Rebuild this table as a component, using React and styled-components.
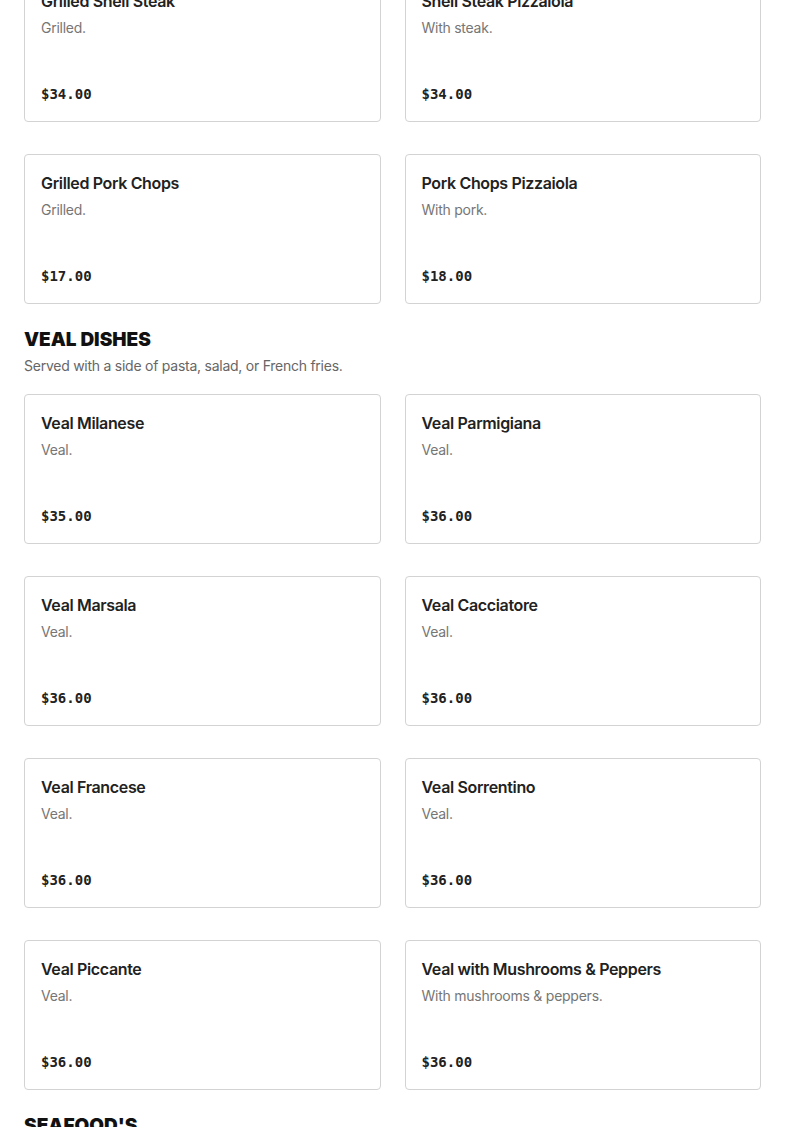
import React from "react";
import styled, { createGlobalStyle } from "styled-components";

const Global = createGlobalStyle`
  html, body { margin: 0; padding: 0; background: #fff; }
  body { font-family: Inter, "Noto Sans", sans-serif; color: #222; }
  * { box-sizing: border-box; }
`;

const Page = styled.main`
  padding: 0 24px 40px;
  margin-top: -28px;
  display: flex;
  flex-direction: column;
`;

const Section = styled.section`
  display: flex;
  flex-direction: column;
  & + & { margin-top: 24px; }
`;

const Heading = styled.h2`
  margin: 0;
  font-family: Inter, sans-serif;
  font-weight: 900;
  font-size: 19px;
  line-height: 24px;
  letter-spacing: 0;
  color: #111;
`;

const Subtitle = styled.p`
  margin: 3px 0 17px;
  font-size: 14px;
  line-height: 22px;
  letter-spacing: -0.25px;
  color: #666;
`;

const Grid = styled.div`
  display: grid;
  grid-template-columns: 1fr 1fr;
  column-gap: 24px;
  row-gap: 32px;
`;

const Card = styled.article`
  height: 150px;
  border: 1px solid #d3d3d3;
  border-radius: 4px;
  padding: 16px;
  display: flex;
  flex-direction: column;
  background: #fff;
`;

const Title = styled.h3`
  margin: 0;
  font-size: 16px;
  font-weight: 600;
  line-height: 24px;
  letter-spacing: -0.35px;
  color: #222;
`;

const Desc = styled.p`
  margin: 4px 0 0;
  font-size: 14px;
  line-height: 22px;
  letter-spacing: -0.25px;
  color: #767676;
`;

const Price = styled.span`
  margin-top: auto;
  font-family: "DejaVu Sans Mono", "Liberation Mono", monospace;
  font-weight: 700;
  font-size: 14px;
  line-height: 22px;
  color: #222;
`;

const sections = [
  {
    items: [
      ["Grilled Shell Steak", "Grilled.", "$34.00"],
      ["Shell Steak Pizzaiola", "With steak.", "$34.00"],
      ["Grilled Pork Chops", "Grilled.", "$17.00"],
      ["Pork Chops Pizzaiola", "With pork.", "$18.00"],
    ],
  },
  {
    title: "VEAL DISHES",
    subtitle: "Served with a side of pasta, salad, or French fries.",
    items: [
      ["Veal Milanese", "Veal.", "$35.00"],
      ["Veal Parmigiana", "Veal.", "$36.00"],
      ["Veal Marsala", "Veal.", "$36.00"],
      ["Veal Cacciatore", "Veal.", "$36.00"],
      ["Veal Francese", "Veal.", "$36.00"],
      ["Veal Sorrentino", "Veal.", "$36.00"],
      ["Veal Piccante", "Veal.", "$36.00"],
      ["Veal with Mushrooms & Peppers", "With mushrooms & peppers.", "$36.00"],
    ],
  },
  {
    title: "SEAFOOD'S",
    subtitle: "Served with a side of pasta, salad, or French fries.",
    items: [],
  },
];

export default function App() {
  return (
    <>
      <Global />
      <Page>
        {sections.map((s, i) => (
          <Section key={i}>
            {s.title && <Heading>{s.title}</Heading>}
            {s.subtitle && <Subtitle>{s.subtitle}</Subtitle>}
            {s.items.length > 0 && (
              <Grid>
                {s.items.map(([t, d, p]) => (
                  <Card key={t}>
                    <Title>{t}</Title>
                    <Desc>{d}</Desc>
                    <Price>{p}</Price>
                  </Card>
                ))}
              </Grid>
            )}
          </Section>
        ))}
      </Page>
    </>
  );
}
